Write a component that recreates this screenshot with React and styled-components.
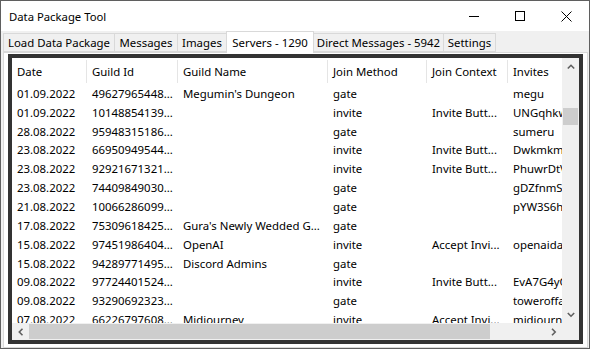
import React from 'react';
import styled, { createGlobalStyle } from 'styled-components';

const GlobalStyle = createGlobalStyle`
  html, body { margin: 0; padding: 0; background: #fff; }
  body { font-family: "Noto Sans", "Segoe UI", sans-serif; color: #000; }
`;

const Window = styled.div`
  width: 590px;
  height: 349px;
  box-sizing: border-box;
  border: 1px solid #5f5f5f;
  background: #f0f0f0;
  display: flex;
  flex-direction: column;
  overflow: hidden;
`;

const TitleBar = styled.div`
  height: 30px;
  flex: none;
  background: #fff;
  display: flex;
  align-items: center;
`;

const Title = styled.div`
  flex: 1;
  padding-left: 8px;
  font-size: 11.3px;
`;

const CaptionButton = styled.div`
  width: 46px;
  height: 30px;
  display: flex;
  align-items: center;
  justify-content: center;
`;

const TabStrip = styled.div`
  height: 21px;
  flex: none;
  display: flex;
  align-items: flex-end;
  padding-left: 2px;
`;

const Tab = styled.div`
  box-sizing: border-box;
  width: ${p => p.$w}px;
  height: ${p => (p.$active ? 22 : 19)}px;
  margin-left: ${p => (p.$first ? 0 : -1)}px;
  margin-bottom: ${p => (p.$active ? -1 : 0)}px;
  border: 1px solid #d9d9d9;
  border-bottom: ${p => (p.$active ? 'none' : '1px solid #d9d9d9')};
  background: ${p => (p.$active ? '#fff' : '#f0f0f0')};
  position: relative;
  z-index: ${p => (p.$active ? 1 : 0)};
  display: flex;
  align-items: center;
  justify-content: center;
  padding-bottom: ${p => (p.$active ? 1 : 0)}px;
  font-size: 11.4px;
  white-space: nowrap;
`;

const Page = styled.div`
  flex: 1;
  min-height: 0;
  margin: 0 1px 0 2px;
  border: 1px solid #d9d9d9;
  background: #fff;
  padding: 1px 4px 3px 4px;
  display: flex;
`;

const ListFrame = styled.div`
  flex: 1;
  border: 4px solid #333;
  background: #fff;
  display: grid;
  grid-template-columns: 1fr 17px;
  grid-template-rows: 1fr 17px;
  min-width: 0;
  min-height: 0;
`;

const Content = styled.div`
  overflow: hidden;
  min-width: 0;
  font-size: 11.4px;
`;

const HeaderRow = styled.div`
  display: flex;
  height: 26px;
`;

const HeaderCell = styled.div`
  flex: none;
  box-sizing: border-box;
  width: ${p => p.$w}px;
  padding-left: 5px;
  position: relative;
  display: flex;
  align-items: center;
  white-space: nowrap;
  &::after {
    content: '';
    position: absolute;
    right: 0;
    top: 2px;
    bottom: 1px;
    width: 1px;
    background: #e5e5e5;
  }
`;

const Row = styled.div`
  display: flex;
  height: 18.85px;
`;

const Cell = styled.div`
  flex: none;
  box-sizing: border-box;
  width: ${p => p.$w}px;
  padding-left: 5px;
  display: flex;
  align-items: center;
  white-space: nowrap;
  overflow: hidden;
`;

const VScroll = styled.div`
  background: #f0f0f0;
  display: flex;
  flex-direction: column;
`;

const HScroll = styled.div`
  background: #f0f0f0;
  display: flex;
`;

const Corner = styled.div`
  background: #f0f0f0;
`;

const Arrow = styled.div`
  flex: none;
  width: 17px;
  height: 17px;
  display: flex;
  align-items: center;
  justify-content: center;
`;

const Track = styled.div`
  flex: 1;
  display: flex;
  flex-direction: ${p => (p.$vertical ? 'column' : 'row')};
`;

const Thumb = styled.div`
  background: #cdcdcd;
  ${p => (p.$vertical
    ? `width: 15px; height: ${p.$size}px; margin: ${p.$offset}px 1px 0;`
    : `height: 15px; width: ${p.$size}px; margin: 1px 0 0 ${p.$offset}px;`)}
`;

const Chevron = ({ dir }) => {
  const pts = {
    up: '0.8,4.5 4,1.3 7.2,4.5',
    down: '0.8,1 4,4.2 7.2,1',
    left: '4.5,0.8 1.3,4 4.5,7.2',
    right: '1,0.8 4.2,4 1,7.2',
  }[dir];
  const vert = dir === 'up' || dir === 'down';
  return (
    <svg width={vert ? 8 : 6} height={vert ? 6 : 8} viewBox={vert ? '0 0 8 6' : '0 0 6 8'}>
      <polyline points={pts} fill="none" stroke="#606060" strokeWidth="1.6" />
    </svg>
  );
};

const tabs = [
  { label: 'Load Data Package', w: 112 },
  { label: 'Messages', w: 64 },
  { label: 'Images', w: 50 },
  { label: 'Servers - 1290', w: 88, active: true },
  { label: 'Direct Messages - 5942', w: 131 },
  { label: 'Settings', w: 53 },
];

const columns = [
  { label: 'Date', w: 75 },
  { label: 'Guild Id', w: 91 },
  { label: 'Guild Name', w: 150 },
  { label: 'Join Method', w: 99 },
  { label: 'Join Context', w: 81 },
  { label: 'Invites', w: 120 },
];

const rows = [
  ['01.09.2022', '49627965448...', "Megumin's Dungeon", 'gate', '', 'megu'],
  ['01.09.2022', '10148854139...', '', 'invite', 'Invite Butt...', 'UNGqhkwT'],
  ['28.08.2022', '95948315186...', '', 'gate', '', 'sumeru'],
  ['23.08.2022', '66950949544...', '', 'invite', 'Invite Butt...', 'Dwkmkmn'],
  ['23.08.2022', '92921671321...', '', 'invite', 'Invite Butt...', 'PhuwrDtV'],
  ['23.08.2022', '74409849030...', '', 'gate', '', 'gDZfnmSx'],
  ['21.08.2022', '10066286099...', '', 'gate', '', 'pYW3S6hK'],
  ['17.08.2022', '75309618425...', "Gura's Newly Wedded G...", 'gate', '', ''],
  ['15.08.2022', '97451986404...', 'OpenAI', 'invite', 'Accept Invi...', 'openaidaily'],
  ['15.08.2022', '94289771495...', 'Discord Admins', 'gate', '', ''],
  ['09.08.2022', '97724401524...', '', 'invite', 'Invite Butt...', 'EvA7G4yC'],
  ['09.08.2022', '93290692323...', '', 'gate', '', 'toweroffantasy'],
  ['07.08.2022', '66226797608...', 'Midjourney', 'invite', 'Accept Invi...', 'midjourney'],
];

const App = () => (
  <>
    <GlobalStyle />
    <Window>
      <TitleBar>
        <Title>Data Package Tool</Title>
        <CaptionButton>
          <svg width="10" height="10"><line x1="0" y1="5.5" x2="10" y2="5.5" stroke="#000" /></svg>
        </CaptionButton>
        <CaptionButton>
          <svg width="10" height="10"><rect x="0.5" y="0.5" width="9" height="9" fill="none" stroke="#000" /></svg>
        </CaptionButton>
        <CaptionButton>
          <svg width="11" height="11">
            <line x1="0.5" y1="0.5" x2="10.5" y2="10.5" stroke="#000" />
            <line x1="10.5" y1="0.5" x2="0.5" y2="10.5" stroke="#000" />
          </svg>
        </CaptionButton>
      </TitleBar>
      <TabStrip>
        {tabs.map((t, i) => (
          <Tab key={t.label} $w={t.w} $active={t.active} $first={i === 0}>{t.label}</Tab>
        ))}
      </TabStrip>
      <Page>
        <ListFrame>
          <Content>
            <HeaderRow>
              {columns.map(c => <HeaderCell key={c.label} $w={c.w}>{c.label}</HeaderCell>)}
            </HeaderRow>
            {rows.map((r, i) => (
              <Row key={i}>
                {r.map((v, j) => <Cell key={j} $w={columns[j].w}>{v}</Cell>)}
              </Row>
            ))}
          </Content>
          <VScroll>
            <Arrow><Chevron dir="up" /></Arrow>
            <Track $vertical>
              <Thumb $vertical $size={17} $offset={33} />
            </Track>
            <Arrow><Chevron dir="down" /></Arrow>
          </VScroll>
          <HScroll>
            <Arrow><Chevron dir="left" /></Arrow>
            <Track>
              <Thumb $size={461} $offset={0} />
            </Track>
            <Arrow><Chevron dir="right" /></Arrow>
          </HScroll>
          <Corner />
        </ListFrame>
      </Page>
    </Window>
  </>
);

export default App;
